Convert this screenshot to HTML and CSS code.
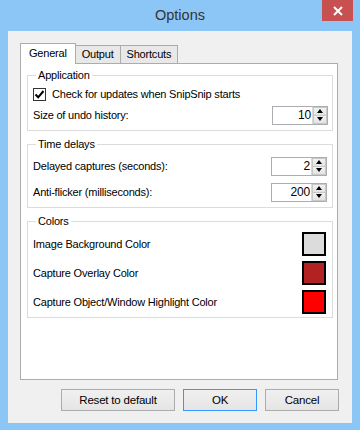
FILE: index.html
```html
<html>
<head>
    <meta charset="utf-8">
    <title>Options</title>
    <link rel="stylesheet" href="styles.css">
</head>
<body>
<div class="window">
    <div class="titlebar">
        <span></span>
        <span class="title">Options</span>
        <span class="close">
            <svg width="10" height="10" viewBox="0 0 10 10"><path d="M1 1L9 9M9 1L1 9" stroke="#fff" stroke-width="2"/></svg>
        </span>
    </div>

    <div class="client">
        <div class="tabs">
            <div class="tab active">General</div>
            <div class="tab">Output</div>
            <div class="tab">Shortcuts</div>
        </div>

        <div class="panel">
            <fieldset class="group app">
                <legend>Application</legend>
                <div class="row check-row">
                    <span class="checkbox">
                        <svg width="11" height="11" viewBox="0 0 11 11"><path d="M1.5 5.5L4.2 8.3L9.5 2" fill="none" stroke="#000" stroke-width="2"/></svg>
                    </span>
                    <span>Check for updates when SnipSnip starts</span>
                </div>
                <div class="row">
                    <span>Size of undo history:</span>
                    <div class="spinner"><span class="value">10</span><span class="arrows"><i class="up"></i><i class="down"></i></span></div>
                </div>
            </fieldset>

            <fieldset class="group delays">
                <legend>Time delays</legend>
                <div class="row">
                    <span>Delayed captures (seconds):</span>
                    <div class="spinner"><span class="value">2</span><span class="arrows"><i class="up"></i><i class="down"></i></span></div>
                </div>
                <div class="row">
                    <span>Anti-flicker (milliseconds):</span>
                    <div class="spinner"><span class="value">200</span><span class="arrows"><i class="up"></i><i class="down"></i></span></div>
                </div>
            </fieldset>

            <fieldset class="group colors">
                <legend>Colors</legend>
                <div class="row color-row">
                    <span>Image Background Color</span>
                    <span class="swatch" style="background:#dcdcdc"></span>
                </div>
                <div class="row color-row">
                    <span>Capture Overlay Color</span>
                    <span class="swatch" style="background:#b22222"></span>
                </div>
                <div class="row color-row">
                    <span>Capture Object/Window Highlight Color</span>
                    <span class="swatch" style="background:#ff0000"></span>
                </div>
            </fieldset>
        </div>

        <div class="buttons">
            <button class="btn reset">Reset to default</button>
            <button class="btn ok">OK</button>
            <button class="btn">Cancel</button>
        </div>
    </div>
</div>
</body>
</html>
```

FILE: styles.css
```css
* {
    box-sizing: border-box;
    font-family: "Liberation Sans", Arial, sans-serif;
}

body {
    margin: 0;
    padding: 0;
}

.window {
    width: 360px;
    height: 430px;
    background-color: #8cc6f6;
    display: flex;
    flex-direction: column;
}

.titlebar {
    height: 31px;
    display: grid;
    grid-template-columns: 1fr auto 1fr;
}

.title {
    font-size: 14.5px;
    color: #333333;
    line-height: 31px;
}

.close {
    justify-self: end;
    width: 31px;
    height: 21px;
    margin-right: 7px;
    background-color: #c75050;
    display: flex;
    align-items: center;
    justify-content: center;
}

.client {
    flex: 1;
    margin: 0 8px 8px 8px;
    background-color: #f0f0f0;
    padding: 12px 14px 12px 12px;
    font-size: 11px;
    letter-spacing: -0.2px;
    color: #000000;
}

.tabs {
    display: flex;
    align-items: flex-end;
    height: 20px;
    position: relative;
    z-index: 1;
}

.tab {
    height: 18px;
    line-height: 17px;
    padding: 0 6px;
    border: 1px solid #acacac;
    border-bottom: none;
    background-color: #e8e8e8;
}

.tab + .tab {
    border-left: none;
}

.tab.active {
    height: 21px;
    margin-bottom: -1px;
    padding: 0 8px;
    background-color: #ffffff;
    line-height: 19px;
}

.panel {
    height: 317px;
    width: 318px;
    border: 1px solid #acacac;
    background-color: #ffffff;
    padding: 4px 4px 0 6px;
}

.group {
    margin: 0 0 6px 0;
    padding: 0 5px;
    border: 1px solid #dcdcdc;
    min-width: 0;
}

legend {
    margin-left: 3px;
    padding: 0 2px;
    line-height: 15px;
}

.row {
    display: flex;
    align-items: center;
    justify-content: space-between;
    height: 20px;
}

.app {
    padding-top: 2px;
    padding-bottom: 5px;
}

.app .check-row {
    justify-content: flex-start;
    height: 18px;
    margin-bottom: 2px;
}

.checkbox {
    width: 13px;
    height: 13px;
    border: 1px solid #333333;
    background-color: #ffffff;
    display: flex;
    align-items: center;
    justify-content: center;
    margin-right: 6px;
}

.app .spinner {
    margin-right: -1px;
}

.delays {
    padding-top: 4px;
    padding-bottom: 5px;
}

.delays .row + .row {
    margin-top: 6px;
}

.spinner {
    width: 56px;
    height: 19px;
    border: 1px solid #abadb3;
    background-color: #ffffff;
    display: flex;
}

.spinner .value {
    flex: 1;
    text-align: right;
    line-height: 17px;
    padding-right: 1px;
    font-size: 12px;
}

.arrows {
    width: 15px;
    display: flex;
    flex-direction: column;
    border-left: 1px solid #d9d9d9;
}

.arrows i {
    flex: 1;
    background: linear-gradient(#f2f2f2, #e3e3e3);
    display: flex;
    align-items: center;
    justify-content: center;
    border: 1px solid #c8c8c8;
}

.arrows i + i {
    border-top: none;
}

.arrows i::before {
    content: "";
    border-left: 3px solid transparent;
    border-right: 3px solid transparent;
}

.arrows .up::before {
    border-bottom: 4px solid #000000;
}

.arrows .down::before {
    border-top: 4px solid #000000;
}

.colors {
    padding-top: 3px;
    padding-bottom: 4px;
}

.color-row {
    height: 23px;
}

.color-row + .color-row {
    margin-top: 6px;
}

.swatch {
    width: 24px;
    height: 24px;
    border: 2px solid #000000;
    margin-right: 1px;
}

.buttons {
    display: flex;
    justify-content: flex-end;
    gap: 8px;
    margin-top: 9px;
    margin-right: -1px;
}

.btn {
    height: 22px;
    width: 74px;
    border: 1px solid #acacac;
    background: linear-gradient(#f0f0f0, #e5e5e5);
    font-size: 11.5px;
    letter-spacing: -0.2px;
    color: #000000;
    padding: 0;
}

.btn.reset {
    width: 114px;
}

.btn.ok {
    border-color: #3399ff;
}
```
